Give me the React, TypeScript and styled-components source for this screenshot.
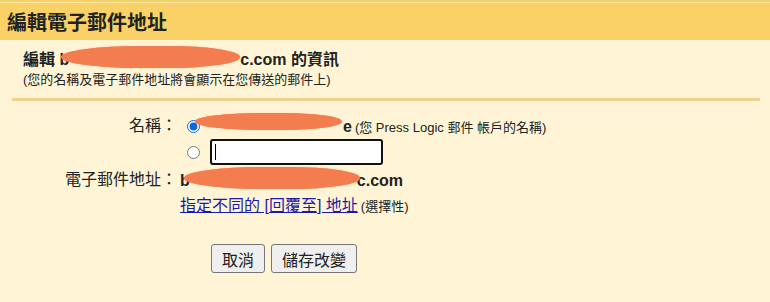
import styled, { createGlobalStyle } from "styled-components";

const GlobalStyle = createGlobalStyle`
  html, body {
    margin: 0;
    padding: 0;
    background: #fff5d6;
  }
  body {
    font-family: "Liberation Sans", "Noto Sans CJK TC", sans-serif;
    color: #222;
  }
`;

const StyledPage = styled.div`
  width: 770px;
  height: 302px;
  overflow: hidden;
  background: #fff5d6;
`;

const StyledTopLine = styled.div`
  height: 2px;
  background: #f8d06a;
  border-bottom: 1px solid #fde8a2;
`;

const StyledHeader = styled.header`
  height: 37px;
  display: flex;
  align-items: center;
  padding-left: 7px;
  background: #f9d166;
`;

const StyledTitle = styled.h1`
  margin: 0;
  font-size: 20px;
  font-weight: bold;
  color: #222;
`;

const StyledIntro = styled.section`
  padding: 9px 0 0 23px;
`;

const StyledIntroHead = styled.div`
  font-size: 16px;
  font-weight: bold;
  line-height: 20px;
`;

const StyledHint = styled.div`
  font-size: 13px;
  line-height: 17px;
  margin-top: 1px;
`;

const StyledDivider = styled.hr`
  margin: 10px 10px 0 12px;
  height: 3px;
  border: 0;
  background: #f0d48b;
`;

const StyledForm = styled.form`
  display: grid;
  grid-template-columns: 177px 1fr;
  column-gap: 3px;
  margin-top: 13px;
  font-size: 16px;
`;

const StyledLabel = styled.label<{ top?: number }>`
  text-align: right;
  line-height: 20px;
  padding-top: ${({ top }) => top ?? 0}px;
`;

const StyledValue = styled.div<{ top?: number }>`
  display: flex;
  flex-direction: column;
  padding-top: ${({ top }) => top ?? 0}px;
`;

const StyledOption = styled.div<{ h: number }>`
  display: flex;
  align-items: center;
  height: ${({ h }) => h}px;
`;

const StyledRadio = styled.input`
  width: 13px;
  height: 13px;
  margin: 0 0 0 7px;
  accent-color: #0a6ad8;
`;

const StyledName = styled.span`
  font-weight: bold;
  margin-left: 1px;
`;

const StyledSmall = styled.span`
  font-size: 13px;
  font-weight: normal;
  margin-left: 3px;
`;

const StyledInputWrap = styled.div`
  position: relative;
  margin-left: 10px;
  &::after {
    content: "";
    position: absolute;
    left: 5px;
    top: 5px;
    width: 1px;
    height: 16px;
    background: #000;
  }
`;

const StyledInput = styled.input`
  box-sizing: border-box;
  width: 173px;
  height: 26px;
  border: 2px solid #111;
  border-radius: 3px;
  background: #fff;
  outline: none;
  font: inherit;
  display: block;
`;

const StyledEmail = styled.div`
  font-weight: bold;
  line-height: 20px;
`;

const StyledLinkRow = styled.div`
  margin-top: 5px;
  line-height: 20px;
`;

const StyledLink = styled.a`
  color: #1a1aa8;
  text-decoration: underline;
  cursor: pointer;
`;

const StyledButtons = styled.div`
  grid-column: 2;
  display: flex;
  gap: 6px;
  margin: 27px 0 0 31px;
`;

const StyledButton = styled.button`
  height: 29px;
  padding: 0 10px;
  font: inherit;
  font-size: 16px;
  color: #222;
  background: #efefef;
  border: 1px solid #767676;
  border-radius: 3px;
`;

/* redaction strokes painted over personal data */
const StyledRedact = styled.span<{ w: number }>`
  position: relative;
  display: inline-block;
  width: ${({ w }) => w}px;
  height: 1em;
  vertical-align: baseline;
`;

const StyledBlob = styled.span<{ l: number; r: number; t: number; h: number }>`
  position: absolute;
  left: ${({ l }) => l}px;
  right: ${({ r }) => r}px;
  top: ${({ t }) => t}px;
  height: ${({ h }) => h}px;
  background: #f47d4f;
  border-radius: 45% 40% 40% 45% / 50%;
  box-shadow: 0 0 1px #f47d4f;
`;

export default function App() {
  return (
    <StyledPage>
      <GlobalStyle />
      <StyledTopLine />
      <StyledHeader>
        <StyledTitle>編輯電子郵件地址</StyledTitle>
      </StyledHeader>
      <StyledIntro>
        <StyledIntroHead>
          編輯 b
          <StyledRedact w={171}>
            <StyledBlob l={-8} r={0} t={-3} h={22} />
          </StyledRedact>
          c.com 的資訊
        </StyledIntroHead>
        <StyledHint>(您的名稱及電子郵件地址將會顯示在您傳送的郵件上)</StyledHint>
      </StyledIntro>
      <StyledDivider />
      <StyledForm onSubmit={(e) => e.preventDefault()}>
        <StyledLabel top={2}>名稱：</StyledLabel>
        <StyledValue>
          <StyledOption h={24}>
            <StyledRadio type="radio" name="name" defaultChecked />
            <StyledName>
              <StyledRedact w={142}>
                <StyledBlob l={-6} r={1} t={-3} h={17} />
              </StyledRedact>
              e
            </StyledName>
            <StyledSmall>(您 Press Logic 郵件 帳戶的名稱)</StyledSmall>
          </StyledOption>
          <StyledOption h={28}>
            <StyledRadio type="radio" name="name" />
            <StyledInputWrap>
              <StyledInput type="text" />
            </StyledInputWrap>
          </StyledOption>
        </StyledValue>
        <StyledLabel top={4}>電子郵件地址：</StyledLabel>
        <StyledValue top={4}>
          <StyledEmail>
            b
            <StyledRedact w={167}>
              <StyledBlob l={-6} r={-3} t={-3} h={22} />
            </StyledRedact>
            c.com
          </StyledEmail>
          <StyledLinkRow>
            <StyledLink>指定不同的 [回覆至] 地址</StyledLink>
            <StyledSmall>(選擇性)</StyledSmall>
          </StyledLinkRow>
        </StyledValue>
        <StyledButtons>
          <StyledButton type="button">取消</StyledButton>
          <StyledButton type="submit">儲存改變</StyledButton>
        </StyledButtons>
      </StyledForm>
    </StyledPage>
  );
}
